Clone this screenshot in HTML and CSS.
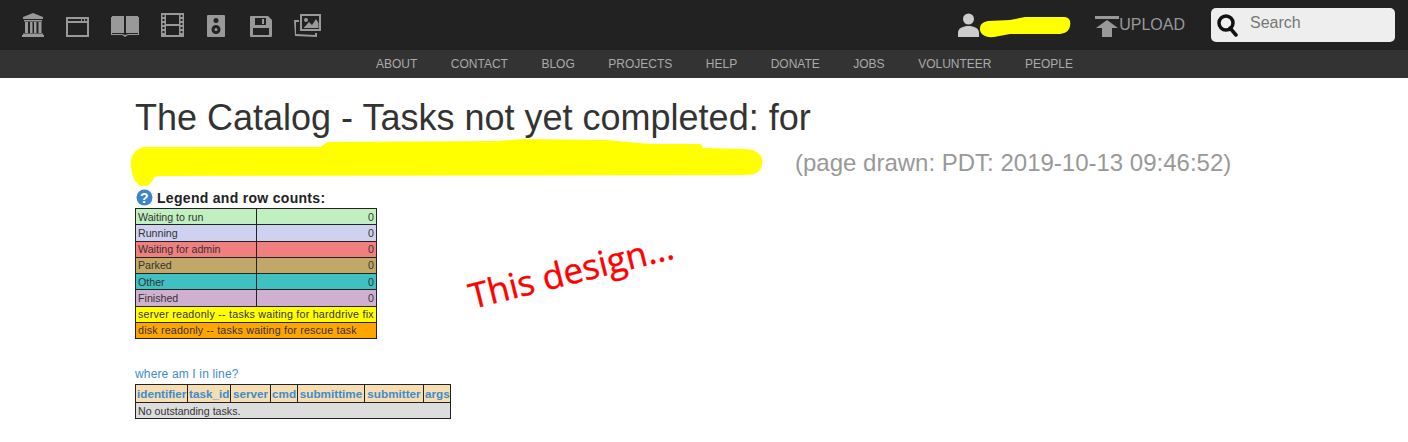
FILE: index.html
```html
<!DOCTYPE html>
<html>
<head>
    <meta charset="UTF-8">
    <link rel="stylesheet" href="styles.css">
</head>
<body>
<div class="topbar">
    <div class="icons">
        <svg class="ico" width="22" height="24" viewBox="0 0 22 24"><path d="M11 0 21 4V6H1V4Z"/><rect x="2" y="7" width="18" height="1.5"/><rect x="3" y="9" width="3" height="11"/><rect x="8" y="9" width="2.5" height="11"/><rect x="12" y="9" width="2.5" height="11"/><rect x="16.500" y="9" width="3" height="11"/><rect x="1" y="20.500" width="20" height="1.500"/><rect y="22" width="22" height="2"/></svg>
        <svg class="ico" width="23" height="20" viewBox="0 0 23 20"><path fill-rule="evenodd" d="M0 0H23V20H0ZM2 6V18H21V6ZM2 2V4H15V2ZM16 2V4H18V2ZM19 2V4H21V2Z"/></svg>
        <svg class="ico" width="28" height="22" viewBox="0 0 28 22"><path fill-rule="evenodd" d="M1 1H13V18H1ZM15 1H27V18H15Z"/><path d="M0 2H1V19H11L14 20 17 19H27V2H28V20H17L14 22 11 20H0Z"/></svg>
        <svg class="ico" width="23" height="24" viewBox="0 0 23 24"><path fill-rule="evenodd" d="M0 0H23V24H0ZM5 2V11H18V2ZM5 13V22H18V13ZM1.500 2V4H3.500V2ZM1.500 6V8H3.500V6ZM1.500 10V12H3.500V10ZM1.500 14V16H3.500V14ZM1.500 18V20H3.500V18ZM19.500 2V4H21.500V2ZM19.500 6V8H21.500V6ZM19.500 10V12H21.500V10ZM19.500 14V16H21.500V14ZM19.500 18V20H21.500V18Z"/></svg>
        <svg class="ico ico-speaker" width="18" height="22" viewBox="0 0 18 22"><path fill-rule="evenodd" d="M1 0H17A1 1 0 0 1 18 1V21A1 1 0 0 1 17 22H1A1 1 0 0 1 0 21V1A1 1 0 0 1 1 0ZM9 3A2.500 2.500 0 1 0 9 8 2.500 2.500 0 1 0 9 3ZM9 10A4.500 4.500 0 1 0 9 19 4.500 4.500 0 1 0 9 10ZM9 13A1.500 1.500 0 1 1 9 16 1.500 1.500 0 1 1 9 13Z"/></svg>
        <svg class="ico ico-floppy" width="22" height="21" viewBox="0 0 22 21"><path fill-rule="evenodd" d="M1 0H18L22 4V20A1 1 0 0 1 21 21H1A1 1 0 0 1 0 20V1A1 1 0 0 1 1 0ZM5 2V9H16V2ZM12 3H14V8H12ZM3 12V19H19V12Z"/></svg>
        <svg class="ico ico-images" width="27" height="23" viewBox="0 0 27 23"><path fill-rule="evenodd" d="M6 0H27V17H6ZM8 2V15H25V2ZM12 4A2 2 0 1 1 12 8 2 2 0 1 1 12 4ZM9.500 14 15 8 18 11 22 5 24.500 9V14Z"/><path d="M0 6H5V8H2V20L21 21V19H23V23L1 22Z"/></svg>
    </div>
    <div class="topright">
        <svg class="usericon" width="21" height="24" viewBox="0 0 21 24"><circle cx="10.500" cy="6" r="5.500"/><path d="M0 24V20C0 15 5 13 10.500 13S21 15 21 20V24Z"/></svg>
        <svg class="userblot" width="91" height="21" viewBox="0 0 91 21"><path d="M8 4 30 3 45 0H84C90 0 91 5 90 9 89 15 84 17 78 17H30L14 20C5 21 0 17 0 12 0 7 3 5 8 4Z"/></svg>
        <div class="upload">
            <svg width="24" height="21" viewBox="0 0 24 21"><rect width="24" height="3"/><path d="M12 4 23 12H17V21H7V12H1Z"/></svg>
            <span>UPLOAD</span>
        </div>
        <div class="searchbox">
            <svg width="22" height="23" viewBox="0 0 22 23"><circle cx="9" cy="9" r="7" fill="none" stroke="#111" stroke-width="3.500"/><path d="M13 14 19 21" stroke="#111" stroke-width="3.500" stroke-linecap="round"/></svg>
            <span>Search</span>
        </div>
    </div>
</div>
<div class="subnav">
    <a>ABOUT</a><a>CONTACT</a><a>BLOG</a><a>PROJECTS</a><a>HELP</a><a>DONATE</a><a>JOBS</a><a>VOLUNTEER</a><a>PEOPLE</a>
</div>
<div class="main">
    <h1>The Catalog - Tasks not yet completed: for</h1>
    <div class="subtitle">
        <svg class="blot" width="634" height="48" viewBox="0 0 634 48"><path d="M1 28C0 16 6 8 16 8L190 8 198 3 368 2 393 0 475 1 521 5 571 5 573 9 616 10C628 11 634 17 632 26 631 33 625 36 616 36L30 37 24 38C22 45 17 48 12 47 4 45 2 36 1 28Z"/></svg>
        <span>(page drawn: PDT: 2019-10-13 09:46:52)</span>
    </div>
    <div class="legendhead">
        <svg width="17" height="17" viewBox="0 0 17 17"><circle cx="8.500" cy="8.500" r="8" fill="#3d85c6"/><text x="8.500" y="13.500" text-anchor="middle" class="qmark">?</text></svg>
        <b>Legend and row counts:</b>
    </div>
    <table class="legend">
        <tr class="c-wait"><td class="name">Waiting to run</td><td class="num">0</td></tr>
        <tr class="c-run"><td class="name">Running</td><td class="num">0</td></tr>
        <tr class="c-admin"><td class="name">Waiting for admin</td><td class="num">0</td></tr>
        <tr class="c-park"><td class="name">Parked</td><td class="num">0</td></tr>
        <tr class="c-other"><td class="name">Other</td><td class="num">0</td></tr>
        <tr class="c-done"><td class="name">Finished</td><td class="num">0</td></tr>
        <tr class="c-server"><td colspan="2">server readonly -- tasks waiting for harddrive fix</td></tr>
        <tr class="c-disk"><td colspan="2">disk readonly -- tasks waiting for rescue task</td></tr>
    </table>
    <a class="whereami">where am I in line?</a>
    <table class="tasks">
        <tr><th>identifier</th><th>task_id</th><th>server</th><th>cmd</th><th>submittime</th><th>submitter</th><th>args</th></tr>
        <tr><td colspan="7">No outstanding tasks.</td></tr>
    </table>
    <div class="note">This design…</div>
</div>
</body>
</html>
```

FILE: styles.css
```css
*{box-sizing: border-box;}
html,body{margin: 0;padding: 0;}
body{background: #fff;color: #333;font-family: "Liberation Sans", Arial, sans-serif;height: 442px;overflow: hidden;}

.topbar{display: flex;align-items: center;justify-content: space-between;height: 50px;background: #222;padding: 0 13px 0 22px;}
.icons{display: flex;align-items: flex-end;}
.ico{fill: #999;margin-right: 22px;display: block;}
.ico-speaker{margin-left: 1px;}
.ico-floppy{margin-left: 3px;}
.topright{display: flex;align-items: center;}
.usericon{fill: #ccc;margin-top: -1px;}
.userblot{fill: #ff0;margin: 4px 0 0 1px;}
.upload{display: flex;align-items: center;margin-left: 24px;color: #999;font-size: 16px;}
.upload svg{fill: #999;margin-top: 2px;}
.searchbox{display: flex;align-items: center;width: 184px;height: 34px;margin-left: 26px;padding-left: 6px;background: #eee;border-radius: 5px;color: #777;font-size: 16px;}
.searchbox span{margin-left: 11px;margin-top: -5px;}

.subnav{display: flex;justify-content: center;height: 28px;padding-left: 41px;background: #333;align-items: center;}
.subnav a{color: #aaa;font-size: 12px;margin: 0 16.750px;}

.main{position: relative;padding: 0 0 0 135px;}
h1{margin: 0;padding-top: 20px;height: 61px;font-size: 36px;font-weight: normal;line-height: 40px;color: #333;}
.subtitle{display: flex;align-items: center;height: 48px;margin-left: -5px;color: #999;font-size: 24px;}
.blot{fill: #ff0;margin-right: 31px;}
.legendhead{display: flex;align-items: center;height: 18px;margin-top: 2px;font-size: 14px;letter-spacing: .3px;color: #222;}
.legendhead svg{margin: -2px 4px 0 1px;}
.qmark{fill: #fff;font-size: 14px;font-weight: bold;}

table{border-collapse: collapse;font-size: 10.67px;color: #333;}
td,th{border: 1px solid #222;padding: 0 2px;height: 16.250px;}
.legend{width: 242px;margin-top: 1px;}
.legend .name{width: 121px;}
.legend .num{text-align: right;}
.c-wait td{background: #c0f0c0;}
.c-run td{background: #d0d0f0;}
.c-admin td{background: #f08080;}
.c-park td{background: #c0a868;}
.c-other td{background: #40c0c0;}
.c-done td{background: #d0b0d0;}
.c-server td{background: #ff0;letter-spacing: .24px;}
.c-disk td{background: #ffa500;letter-spacing: .2px;}

.whereami{display: block;margin-top: 27px;height: 18px;line-height: 16px;color: #428bca;font-size: 12px;letter-spacing: .15px;}
.tasks{width: 316px;table-layout: fixed;}
.tasks th{background: #f5deb3;color: #428bca;font-size: 11.700px;font-weight: bold;height: 18px;padding: 0 1px;white-space: nowrap;overflow: hidden;}
.tasks th:nth-child(1){width: 52px;}
.tasks th:nth-child(2){width: 43px;}
.tasks th:nth-child(3){width: 40px;}
.tasks th:nth-child(4){width: 27px;}
.tasks th:nth-child(5){width: 67px;}
.tasks th:nth-child(6){width: 59px;}
.tasks td{background: #ddd;height: 16px;}

.note{position: absolute;left: 466px;top: 169px;color: #f00;font-family: "Open Sans", sans-serif;font-size: 35px;-webkit-text-stroke: .4px #f00;transform: rotate(-14deg);white-space: nowrap;}
```
